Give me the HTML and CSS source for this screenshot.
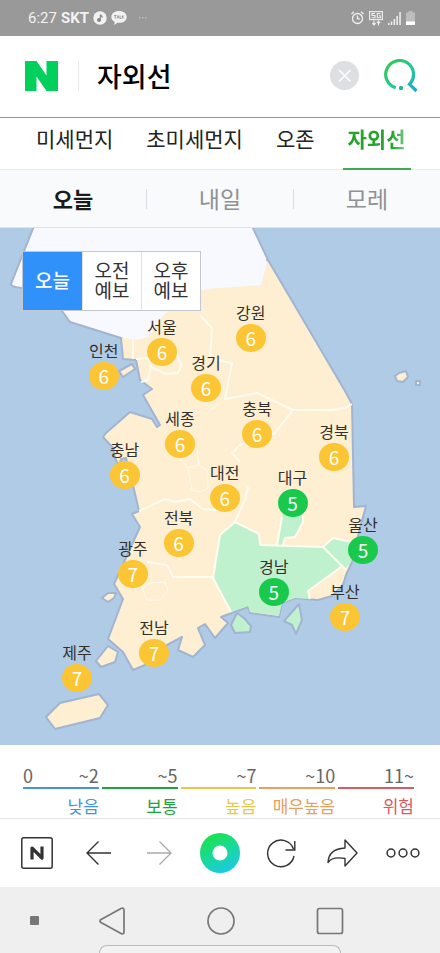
FILE: index.html
```html
<!DOCTYPE html>
<html lang="ko">
<head>
    <meta charset="UTF-8">
    <meta name="viewport" content="width=device-width, initial-scale=1.0">
    <title>자외선</title>
    <link rel="stylesheet" href="styles.css">
</head>
<body>
    <div class="status-bar">
        <div class="status-left">
            <span>6:27</span>
            <strong>SKT</strong>
            <svg width="14" height="14" viewBox="0 0 14 14">
                <circle cx="7" cy="7" r="6.7" fill="#f2f2f2"/>
                <circle cx="6" cy="9" r="2" fill="#888"/>
                <path d="M7.4 9V3.5c.3 1.3 2 1.3 2 3" fill="none" stroke="#888" stroke-width="1.2"/>
            </svg>
            <svg width="16" height="14" viewBox="0 0 16 14">
                <path d="M8 0C3.6 0 .3 2.6 .3 6c0 2.2 1.4 4 3.5 5L3 14l3.5-2.2C12 12.3 15.7 9.8 15.7 6S12.4 0 8 0z" fill="#f2f2f2"/>
                <path d="M3 4.5h2.5M4.2 4.5v3M6 7.5l1-3 1 3M9 4.5v3h1.3M11.3 4.5v3M13 4.5l-1.5 1.5L13 7.5" fill="none" stroke="#8a8a8a" stroke-width=".8"/>
            </svg>
            <svg class="more-dots" width="8" height="2" viewBox="0 0 8 2" fill="#bbb">
                <path d="M0 0h1.5v1.5H0zM3 0h1.5v1.5H3zM6 0h1.5v1.5H6z"/>
            </svg>
        </div>
        <div class="status-right">
            <svg width="13" height="14" viewBox="0 0 13 14" fill="none" stroke="#f0f0f0" stroke-width="1.3">
                <circle cx="6.5" cy="7.5" r="5"/>
                <path d="M6.5 4.5v3.3h2.3M.5 3L3 .8M12.5 3L10 .8"/>
            </svg>
            <svg width="14" height="15" viewBox="0 0 14 15" fill="none" stroke="#f0f0f0" stroke-width="1.1">
                <rect x=".6" y=".6" width="12.8" height="8"/>
                <path d="M6 2.5H3v2h3v2.2H2.6M11.5 2.5H8.3v4.2h3V4.8H10"/>
                <path d="M5 9.5v4M3.4 12l1.6 2 1.6-2M9.5 14.5v-4M7.9 12.2l1.6-2 1.6 2"/>
            </svg>
            <svg width="13" height="13" viewBox="0 0 13 13" fill="#f0f0f0">
                <path d="M0 11h1.5v2H0zM2.8 9.5h1.5V13H2.8zM5.6 7h1.5v6H5.6zM8.4 4h1.5v9H8.4zM11.3 0h1.5v13h-1.5z"/>
            </svg>
            <svg class="battery" width="9" height="14" viewBox="0 0 9 14">
                <path d="M2.5 0h4v1.5H9V14H0V1.5h2.5z" fill="#bdbdbd"/>
                <path d="M0 10.5h9V14H0z" fill="#fff"/>
            </svg>
        </div>
    </div>

    <form class="search">
        <a class="logo" href="#" aria-label="NAVER">
            <svg width="33" height="30" viewBox="0 0 33 30"><path d="M0 0h11.5l10 14.5V0H33v30H21.5l-10-14.5V30H0z" fill="#03cf5d"/></svg>
        </a>
        <input class="search-input" type="text" value="자외선" aria-label="검색어">
        <button class="clear" type="button" aria-label="지우기">
            <svg width="29" height="29" viewBox="0 0 29 29">
                <circle cx="14.5" cy="14.5" r="14.5" fill="#dedfe3"/>
                <path d="M9 9l11.5 11.5M20.5 9L9 20.5" stroke="#fff" stroke-width="1.5"/>
            </svg>
        </button>
        <button class="submit" type="submit" aria-label="검색">
            <svg width="34" height="34" viewBox="0 0 34 34">
                <defs>
                    <linearGradient id="lens" gradientUnits="userSpaceOnUse" x1="5" y1="4" x2="32" y2="30">
                        <stop offset="0" stop-color="#35c759"/>
                        <stop offset=".55" stop-color="#1fc99a"/>
                        <stop offset="1" stop-color="#1fa9c9"/>
                    </linearGradient>
                </defs>
                <path d="M11.8 28.8A13.9 13.9 0 1 1 25.5 25.2L32.5 32" fill="none" stroke="url(#lens)" stroke-width="3.2"/>
                <circle cx="17" cy="29" r="2.2" fill="#22bd8c"/>
            </svg>
        </button>
    </form>

    <nav class="tabs">
        <a href="#">미세먼지</a>
        <a href="#">초미세먼지</a>
        <a href="#">오존</a>
        <a class="active" href="#"><span>자외선</span></a>
    </nav>

    <div class="days">
        <button class="active" type="button">오늘</button>
        <button type="button">내일</button>
        <button type="button">모레</button>
    </div>

    <main>
        <div class="map">
            <svg class="map-base" viewBox="0 228 440 517">
                <!-- coast -->
                <g class="coast">
                    <path class="north" d="M34 226L11 284Q11 287 22 288L62 311L70 322L121 338L145 339L268 260L252 226z"/>
                    <path class="land" d="M268 260L345 391L352 404L354 507L366 506L360 528L352 562L346 575L343 585L332 596L318 600L295 598L282 603L279 617L250 613L248 607L221 617L228 623L215 638L205 624L198 628L205 645L193 657L178 650L182 637L167 645L145 665L133 670L123 652L108 639L123 599L114 584L125 560L140 527L132 514L139 511L133 485L126 458L121 459L119 466L115 458L113 448L103 437L106 433L130 412L152 419L157 427L160 425L143 395L152 389L140 380L136 360L123 359L121 338L150 300L200 270L260 262z"/>
                    <path class="land" d="M119 371L132 364L135 369L123 377z"/>
                    <path class="land" d="M102 598L108 593L116 593L114 598L108 602z"/>
                    <path class="land" d="M108 646L118 652L115 662L101 667L96 661z"/>
                    <path class="land" d="M99 694L108 705L100 718L55 729L46 717L60 703z"/>
                    <path class="land" d="M395 376L399 373L406 371L408 377L403 382L397 381z"/>
                    <path class="land" d="M416 381h4v4h-4z"/>
                    <path class="mild" d="M237 613L244 618L251 626L250 632L235 633L231 625z"/>
                    <path class="mild" d="M299 604L302 620L296 634L292 625L284 621z"/>
                </g>
                <!-- fills without coast line -->
                <path class="north" d="M121 337L134 340Q147 340 151 333Q158 321 167 312Q178 300 195 292Q208 288 220 288L261 285L267 262L251 227L150 227L110 300z"/>
                <path class="mild" d="M235 522L259 534L260 545L323 547L342 567L308 591L310 599L295 598L282 603L279 616L250 612L248 606L231 612L213 578L220 535z"/>
                <path class="mild" d="M323 547L333 538L356 543L351 562L345 569z"/>
                <path class="mild" d="M282 517L277 545L283 545L285 538L295 537L303 522L303 512L285 508z"/>
                <!-- province borders -->
                <g class="borders">
                    <path d="M260 545L323 547L346 570M323 547L333 538L357 543M231 612L213 578L220 535L235 522L259 534L260 545M341 567L308 591L310 599"/>
                    <path d="M282 517L277 545M283 545L285 538L295 537L303 522V512"/>
                    <path d="M139 511L165 499L175 502L190 499L203 509L220 510M248 487L245 500L235 522M147 562L167 565L173 577H213"/>
                    <path d="M200 315L212 328L210 359L232 363L225 399L257 393L293 410L333 410L345 408L352 404M293 410L275 433L240 445L232 453L240 462"/>
                    <path d="M133 340V359M136 359L148 358L151 366L148 380L141 382M151 367L166 374L178 373L181 366L177 353"/>
                    <path class="thin" d="M142 588L150 583L165 582L168 590L160 600L147 600zM188 468L199 465L207 470L208 488L201 492L192 490zM181 460L188 468M197 450L199 465M205 415L218 404"/>
                </g>
            </svg>

            <div class="periods">
                <button class="active" type="button">오늘</button>
                <button type="button">오전<br>예보</button>
                <button type="button">오후<br>예보</button>
            </div>

            <div class="pin gangwon"><span>강원</span><b>6</b></div>
            <div class="pin seoul"><span>서울</span><b>6</b></div>
            <div class="pin incheon"><span>인천</span><b>6</b></div>
            <div class="pin gyeonggi"><span>경기</span><b>6</b></div>
            <div class="pin sejong"><span>세종</span><b>6</b></div>
            <div class="pin chungbuk"><span>충북</span><b>6</b></div>
            <div class="pin chungnam"><span>충남</span><b>6</b></div>
            <div class="pin gyeongbuk"><span>경북</span><b>6</b></div>
            <div class="pin daejeon"><span>대전</span><b>6</b></div>
            <div class="pin daegu normal"><span>대구</span><b>5</b></div>
            <div class="pin jeonbuk"><span>전북</span><b>6</b></div>
            <div class="pin ulsan normal"><span>울산</span><b>5</b></div>
            <div class="pin gwangju"><span>광주</span><b>7</b></div>
            <div class="pin gyeongnam normal"><span>경남</span><b>5</b></div>
            <div class="pin busan"><span>부산</span><b>7</b></div>
            <div class="pin jeonnam"><span>전남</span><b>7</b></div>
            <div class="pin jeju"><span>제주</span><b>7</b></div>
        </div>

        <ul class="legend">
            <li class="low"><div class="range"><span>0</span><span>~2</span></div><em>낮음</em></li>
            <li class="mid"><div class="range"><span>~5</span></div><em>보통</em></li>
            <li class="high"><div class="range"><span>~7</span></div><em>높음</em></li>
            <li class="very-high"><div class="range"><span>~10</span></div><em>매우높음</em></li>
            <li class="danger"><div class="range"><span>11~</span></div><em>위험</em></li>
        </ul>
    </main>

    <div class="toolbar">
        <button type="button" aria-label="홈">
            <svg width="32" height="32" viewBox="0 0 32 32" fill="none" stroke="#333">
                <rect x=".8" y=".8" width="30.4" height="30.4" rx="2" stroke-width="1.5"/>
                <path d="M11 22.5V11L21 21V9.5" stroke-width="3.2" stroke-linejoin="round"/>
            </svg>
        </button>
        <button type="button" aria-label="뒤로">
            <svg width="26" height="26" viewBox="0 0 26 26" fill="none" stroke="#333" stroke-width="1.4">
                <path d="M26 13H2M13.5 1.5L2 13l11.5 11.5"/>
            </svg>
        </button>
        <button type="button" aria-label="앞으로">
            <svg width="26" height="26" viewBox="0 0 26 26" fill="none" stroke="#aaa" stroke-width="1.3">
                <path d="M1 13h24M13.5 1.5L25 13 13.5 24.5"/>
            </svg>
        </button>
        <button type="button" aria-label="그린닷">
            <svg width="40" height="40" viewBox="0 0 40 40">
                <defs>
                    <linearGradient id="dot" x1=".25" y1="0" x2=".75" y2="1">
                        <stop offset="0" stop-color="#1de245"/>
                        <stop offset=".5" stop-color="#18d99c"/>
                        <stop offset="1" stop-color="#1bc8ea"/>
                    </linearGradient>
                </defs>
                <circle cx="20" cy="20" r="20" fill="url(#dot)"/>
                <circle cx="20" cy="20" r="7.5" fill="#fff"/>
            </svg>
        </button>
        <button type="button" aria-label="새로고침">
            <svg width="30" height="30" viewBox="0 0 30 30" fill="none" stroke="#333" stroke-width="1.4">
                <path d="M28 18A13.3 13.3 0 1 1 27.5 11M28.8 3v9H19.5"/>
            </svg>
        </button>
        <button type="button" aria-label="공유">
            <svg width="31" height="28" viewBox="0 0 31 28" fill="none" stroke="#333" stroke-width="1.4" stroke-linejoin="round">
                <path d="M18 1L30 14 18 27V19.5C10 18 4 19 1 23.5 1.5 14 8 9.5 18 9z"/>
            </svg>
        </button>
        <button type="button" aria-label="더보기">
            <svg width="34" height="10" viewBox="0 0 34 10" fill="none" stroke="#333" stroke-width="1.5">
                <circle cx="5" cy="5" r="3.9"/><circle cx="17" cy="5" r="3.9"/><circle cx="29" cy="5" r="3.9"/>
            </svg>
        </button>
    </div>

    <div class="system-nav">
        <div class="system-keys">
            <span class="key-dot"></span>
            <button type="button" aria-label="이전">
                <svg width="28" height="28" viewBox="0 0 28 28" fill="none" stroke="#777" stroke-width="1.7" stroke-linejoin="round">
                    <path d="M3 12.5L23.5 1.3Q26 .6 26 3v22q0 2.4-2.5 1.7L3 15.5q-2.2-1.5 0-3z"/>
                </svg>
            </button>
            <button type="button" aria-label="홈 화면">
                <svg width="28" height="28" viewBox="0 0 28 28" fill="none" stroke="#777" stroke-width="1.7"><circle cx="14" cy="14" r="13"/></svg>
            </button>
            <button type="button" aria-label="최근 앱">
                <svg width="28" height="28" viewBox="0 0 28 28" fill="none" stroke="#777" stroke-width="1.7"><rect x="1.5" y="1.5" width="25" height="25" rx="2"/></svg>
            </button>
        </div>
        <div class="handle"></div>
    </div>
</body>
</html>
```

FILE: styles.css
```css
* {
    margin: 0;
    padding: 0;
    box-sizing: border-box;
}

body {
    background: #fff;
    color: #222;
    font-family: 'Noto Sans CJK KR', sans-serif;
    overflow-x: hidden;
}

button {
    border: none;
    background: none;
    font-family: inherit;
    color: inherit;
    cursor: pointer;
}

a {
    color: inherit;
    text-decoration: none;
}

svg {
    display: block;
}

/* status bar */
.status-bar {
    display: flex;
    justify-content: space-between;
    align-items: center;
    height: 36px;
    padding: 0 25px 0 28px;
    background: #999;
    color: #f2f2f2;
    font-family: Roboto, sans-serif;
    font-size: 15px;
}

.status-left,
.status-right {
    display: flex;
    align-items: center;
    gap: 4px;
}

.status-right {
    gap: 5px;
}

.more-dots {
    margin-left: 8px;
}

/* search */
.search {
    display: flex;
    align-items: center;
    height: 82px;
    padding: 0 22px 2px 25px;
    border-bottom: 1px solid #55b58e;
}

.logo {
    padding-right: 20px;
}

.search-input {
    flex: 1;
    min-width: 0;
    height: 30px;
    padding-left: 18px;
    border: none;
    border-left: 1px solid #e4e6e8;
    outline: none;
    background: none;
    color: #000;
    font-family: inherit;
    font-size: 27px;
    font-weight: 500;
}

.clear {
    margin-right: 25px;
}

/* tabs */
.tabs {
    display: flex;
    gap: 23px;
    height: 52px;
    padding-left: 31px;
    border-bottom: 1px solid #e6eaed;
    font-size: 21px;
    line-height: 40px;
    white-space: nowrap;
}

.tabs a {
    height: 52px;
    padding: 0 5px;
}

.tabs .active {
    border-bottom: 2px solid #45a854;
    font-weight: 700;
}

.tabs .active span {
    background: linear-gradient(to right, #26a32c 75%, #7cc98a);
    background-clip: text;
    -webkit-background-clip: text;
    color: transparent;
}

.days {
    display: flex;
    align-items: center;
    height: 58px;
    background: #f9fafc;
    border-bottom: 1px solid #dde5ec;
}

.days button {
    flex: 1;
    height: 20px;
    padding-bottom: 2px;
    font-size: 23px;
    line-height: 18px;
    color: #8f9193;
}

.days button + button {
    border-left: 1px solid #d9dbde;
}

.days .active {
    font-size: 22px;
    font-weight: 700;
    color: #1b1b1b;
}

/* map */
.map {
    position: relative;
    background: #afcbe5;
}

.map-base {
    width: 100%;
    height: auto;
}

.coast path {
    stroke: #a2b4d0;
    stroke-width: 2;
    stroke-linejoin: round;
}

.land {
    fill: #feefd2;
}

.north {
    fill: #f8f9fe;
}

.mild {
    fill: #bff1cf;
}

.borders {
    fill: none;
    stroke: #fffbf0;
    stroke-width: 2;
    stroke-linejoin: round;
}

.borders .thin {
    stroke-width: 1;
}

.periods {
    position: absolute;
    top: 23px;
    left: 22px;
    display: flex;
    border: 1px solid #c3c8d0;
    background: #fff;
}

.periods button {
    width: 59px;
    height: 58px;
    padding-bottom: 2px;
    font-size: 19px;
    line-height: 20px;
    color: #333;
}

.periods button + button {
    border-left: 1px solid #dfe3e8;
}

.periods .active {
    background: #3091fb;
    color: #fff;
    font-weight: 500;
}

.pin {
    position: absolute;
    display: flex;
    flex-direction: column;
    align-items: center;
    gap: 2px;
    transform: translateX(-50%);
}

.pin span {
    font-size: 16px;
    line-height: 20px;
    white-space: nowrap;
    color: #33302c;
}

.pin b {
    width: 30px;
    height: 28px;
    border-radius: 50%;
    background: #fbc533;
    color: #fff;
    font-size: 19px;
    font-weight: 400;
    line-height: 28px;
    text-align: center;
}

.pin.normal b {
    background: #18c94c;
}

.gangwon { left: 57%; top: 14.4%; }
.seoul { left: 36.8%; top: 17.1%; }
.incheon { left: 23.6%; top: 21.7%; }
.gyeonggi { left: 46.8%; top: 24%; }
.sejong { left: 40.9%; top: 34.9%; }
.chungbuk { left: 58.4%; top: 32.8%; }
.chungnam { left: 28.3%; top: 40.8%; }
.gyeongbuk { left: 75.9%; top: 37.4%; }
.daejeon { left: 51.1%; top: 45.3%; }
.daegu { left: 66.5%; top: 46.3%; }
.jeonbuk { left: 40.6%; top: 53.9%; }
.ulsan { left: 82.5%; top: 55.4%; }
.gwangju { left: 30.2%; top: 60%; }
.gyeongnam { left: 62.2%; top: 63.4%; }
.busan { left: 78.4%; top: 68.3%; }
.jeonnam { left: 35%; top: 75.3%; }
.jeju { left: 17.5%; top: 80.1%; }

/* legend */
.legend {
    display: flex;
    gap: 3px;
    padding: 18px 26px 0 23px;
    list-style: none;
}

.legend li {
    flex: 1;
    min-width: 0;
    text-align: right;
}

.range {
    display: flex;
    justify-content: flex-end;
    border-bottom: 2px solid;
    font-size: 18px;
    line-height: 24px;
}

.range span {
    color: #666;
}

.low .range {
    justify-content: space-between;
}

.legend em {
    display: block;
    padding-top: 4px;
    font-size: 17px;
    font-style: normal;
    line-height: 25px;
    white-space: nowrap;
}

.low { color: #4596d9; }
.mid { color: #1ba63a; }
.high { color: #e9c74a; }
.very-high { color: #e8a05c; }
.danger { color: #d95a60; }

/* browser toolbar */
.toolbar {
    display: flex;
    align-items: center;
    height: 69px;
    padding: 0 6px;
    border-top: 1px solid #e2e4e6;
    background: #fff;
}

.toolbar button {
    flex: 1;
    display: flex;
    justify-content: center;
}

/* system navigation */
.system-nav {
    background: #efefef;
}

.system-keys {
    display: grid;
    grid-template-columns: 57px 1fr 1fr 1fr 55px;
    align-items: center;
    height: 58px;
    padding-top: 9px;
}

.system-keys button {
    display: flex;
    justify-content: center;
}

.key-dot {
    justify-self: end;
    width: 9px;
    height: 9px;
    margin-right: 18px;
    border-radius: 1px;
    background: #777;
}

.handle {
    width: 55%;
    height: 8px;
    margin: 0 auto;
    border: 1px solid #bbb;
    border-bottom: none;
    border-radius: 20px 20px 0 0;
    background: #f2f2f2;
}
```
